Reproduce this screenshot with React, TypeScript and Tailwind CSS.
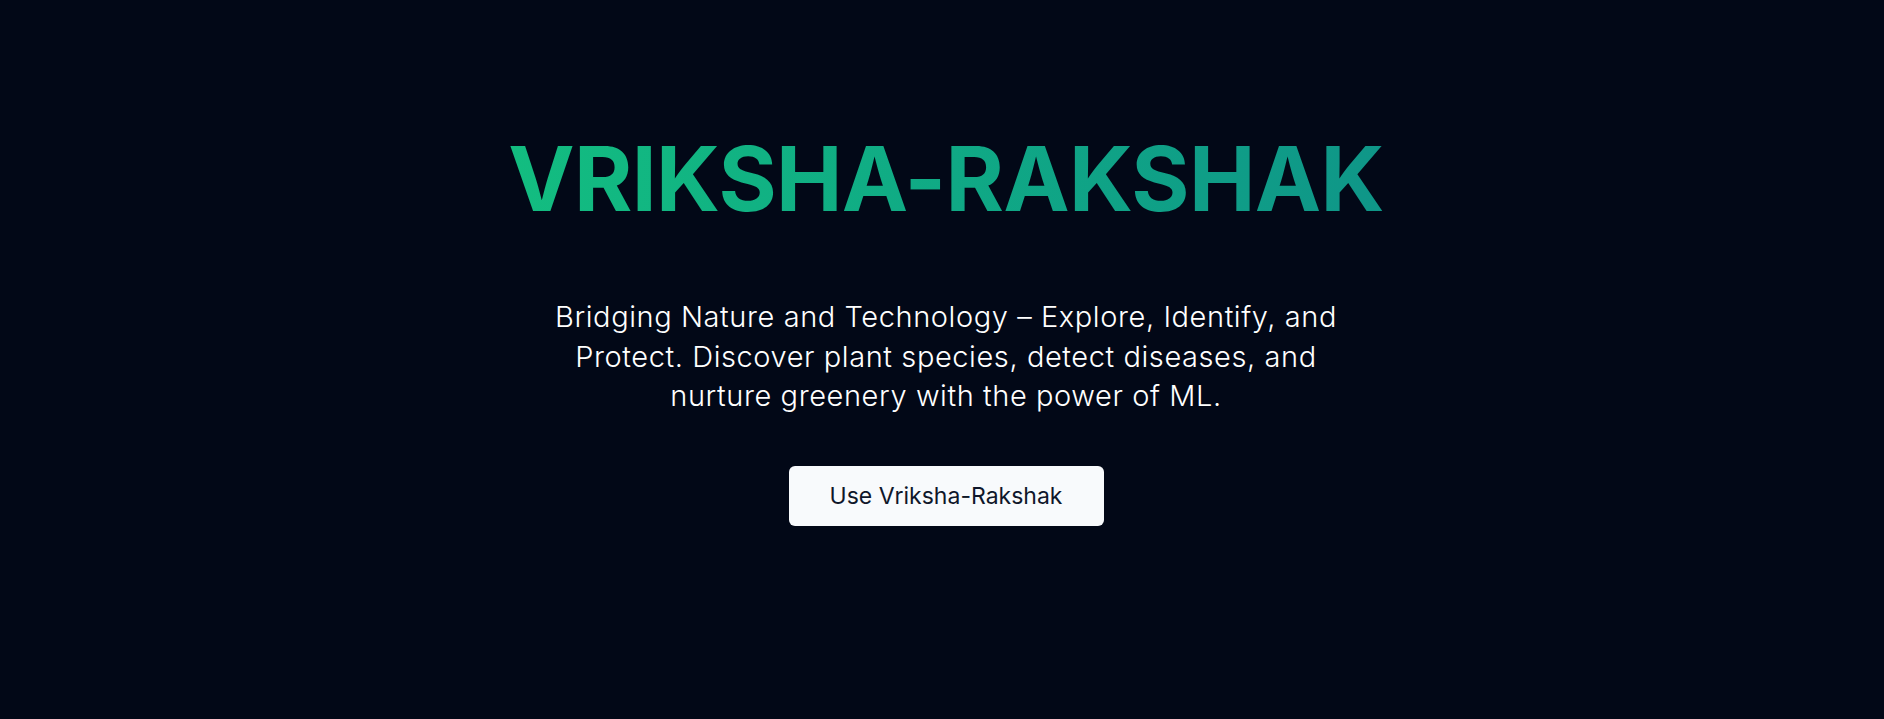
export default function App() {
    return (
        <div className="min-h-screen w-full bg-[#020817] flex flex-col items-center pt-[134px] pl-[8px] font-['Inter',sans-serif]">
            <h1 className="text-[89px] leading-none font-bold tracking-[-0.008em] bg-gradient-to-r from-[#13bd80] to-[#0f9688] bg-clip-text text-transparent">
                VRIKSHA-RAKSHAK
            </h1>
            <p className="mt-[74px] max-w-[800px] text-center text-[29px] leading-[39.6px] font-light tracking-[0.02em] text-white">
                Bridging Nature and Technology – Explore, Identify, and Protect. Discover plant species, detect diseases,
                and nurture greenery with the power of ML.
            </p>
            <button className="mt-[50px] w-[315px] h-[60px] rounded-md bg-[#f8fafc] text-[#0f172a] text-[23px] cursor-pointer">
                Use Vriksha-Rakshak
            </button>
        </div>
    );
}
